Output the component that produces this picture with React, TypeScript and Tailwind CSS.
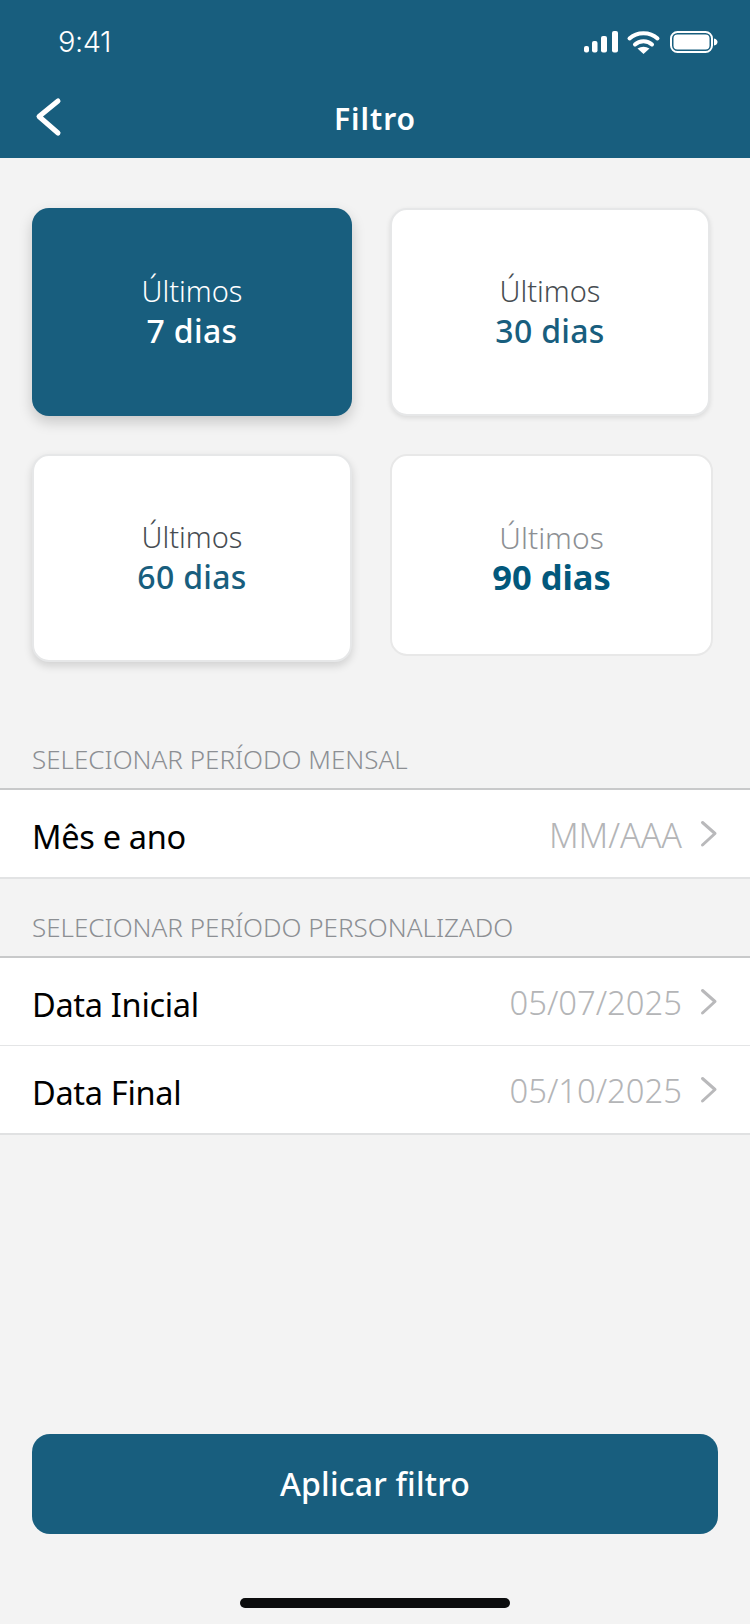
import React from "react";

function Card({ num, cls, top, bottom }: { num: string; cls: string; top: string; bottom: string }) {
  return (
    <div className={`flex flex-col items-center justify-center rounded-[17px] ${cls}`}>
      <span className={`font-light ${top}`}>Últimos</span>
      <span className={bottom}>{num} dias</span>
    </div>
  );
}

function Chevron() {
  return (
    <svg width="18" height="28" viewBox="0 0 18 28" className="ml-[18px]" fill="none">
      <path d="M2.5 2.5 L15 13.5 L2.5 25" stroke="#b9b9bb" strokeWidth="3" strokeLinecap="round" strokeLinejoin="round" />
    </svg>
  );
}

function Row({ label, value, border, valueCls }: { label: string; value: string; border: string; valueCls: string }) {
  return (
    <div className={`flex items-center justify-between bg-white pl-[32px] pr-[32px] ${border}`}>
      <span className="text-[32.5px] leading-[44px] text-black font-normal tracking-[-0.3px] mt-[6px]">{label}</span>
      <div className="flex items-center">
        <span className={`leading-[44px] text-[#b4b5b7] font-light mt-[2px] ${valueCls}`}>{value}</span>
        <Chevron />
      </div>
    </div>
  );
}

export default function App() {
  return (
    <div className="w-[750px] h-[1624px] bg-[#f3f3f3] flex flex-col font-['Noto_Sans','Open_Sans',sans-serif] overflow-hidden">
      <header className="h-[158px] bg-[#185e7e] text-white shrink-0 flex flex-col">
        <div className="flex items-center justify-between pl-[58px] pr-[32px] pt-[24px] h-[60px]">
          <span className="text-[29px] leading-[36px] font-['Inter',sans-serif] font-light tracking-[-0.5px]">9:41</span>
          <svg width="135" height="24" viewBox="0 0 135 24" fill="white">
            <rect x="1" y="16" width="5" height="6.5" rx="2" />
            <rect x="9" y="11" width="5.5" height="11.5" rx="2" />
            <rect x="18" y="6" width="6" height="16.5" rx="2" />
            <rect x="29" y="1" width="6" height="21.5" rx="2" />
            <path d="M46.5 8.5 C54 1.5 67 1.5 74.5 8.5" stroke="white" strokeWidth="4" fill="none" strokeLinecap="round" />
            <path d="M52 14.5 C56.5 10 64.5 10 69 14.5" stroke="white" strokeWidth="4" fill="none" strokeLinecap="round" />
            <path d="M54.5 18.5 Q60.5 15 66.5 18.5 L60.5 24 Z" />
            <rect x="88" y="2" width="41" height="20" rx="6.5" fill="none" stroke="white" strokeWidth="2" />
            <rect x="90.5" y="4.5" width="36" height="15" rx="4" />
            <path d="M131 8.5 C133.5 9 134.5 10.5 134.5 12 C134.5 13.5 133.5 15 131 15.5 Z" />
          </svg>
        </div>
        <div className="relative flex items-center justify-center h-[60px] mt-[29px]">
          <svg width="30" height="40" viewBox="0 0 30 40" fill="none" className="absolute left-[33px] top-[8px]">
            <path d="M25 4 L6 19.5 L25 36" stroke="white" strokeWidth="5" strokeLinecap="round" strokeLinejoin="round" />
          </svg>
          <span className="text-[30px] leading-[38px] font-semibold tracking-[1px]">Filtro</span>
        </div>
      </header>

      <main className="flex flex-col flex-1">
        <div className="flex items-start pl-[32px] pt-[50px]">
          <Card num="7" cls="w-[320px] h-[208px] bg-[#185e7e] shadow-[0_6px_14px_rgba(0,0,0,0.18)]" top="text-white text-[29px] leading-[38px]" bottom="text-white text-[32px] leading-[42px] font-medium tracking-[0.3px]" />
          <Card num="30" cls="w-[320px] h-[208px] ml-[38px] bg-white border-2 border-[#e6e7e8] shadow-[0_2px_5px_rgba(0,0,0,0.1)]" top="text-[#474d52] text-[29px] leading-[38px]" bottom="text-[#185e7e] text-[32px] leading-[42px] font-medium tracking-[0.3px]" />
        </div>
        <div className="flex items-start pl-[32px] mt-[38px]">
          <Card num="60" cls="w-[320px] h-[208px] bg-white border-2 border-[#e6e7e8] shadow-[0_4px_8px_rgba(0,0,0,0.14)]" top="text-[#474d52] text-[29px] leading-[38px]" bottom="text-[#185e7e] text-[32px] leading-[42px] font-medium tracking-[0.3px]" />
          <Card num="90" cls="w-[323px] h-[202px] ml-[38px] bg-white border-2 border-[#e8e8e8] pt-[8px]" top="text-[#8d9094] text-[30px] leading-[36px]" bottom="text-[#02587c] text-[34.5px] leading-[42px] font-bold" />
        </div>

        <div className="pl-[32px] pt-[80px] pb-[12px] text-[26px] leading-[34px] text-[#8c8f93] font-light">SELECIONAR PERÍODO MENSAL</div>
        <Row label="Mês e ano" value="MM/AAA" valueCls="text-[34px]" border="h-[91px] border-t-2 border-t-[#c8c9ca] border-b-2 border-b-[#e2e3e4]" />

        <div className="pl-[32px] pt-[31px] pb-[12px] text-[26px] leading-[34px] text-[#8c8f93] font-light">SELECIONAR PERÍODO PERSONALIZADO</div>
        <Row label="Data Inicial" value="05/07/2025" valueCls="text-[32.8px]" border="h-[90px] border-t-2 border-t-[#c8c9ca] border-b-[1px] border-b-[#e4e5e6]" />
        <Row label="Data Final" value="05/10/2025" valueCls="text-[32.8px]" border="h-[89px] border-b-2 border-b-[#e0e1e2]" />

        <div className="mt-auto flex flex-col items-center px-[32px]">
          <button className="w-full h-[100px] rounded-[18px] bg-[#185e7e] text-white text-[32px] font-medium tracking-[0.2px]">Aplicar filtro</button>
          <div className="w-[270px] h-[10px] rounded-full bg-[#0b0c0d] mt-[64px] mb-[16px]" />
        </div>
      </main>
    </div>
  );
}
